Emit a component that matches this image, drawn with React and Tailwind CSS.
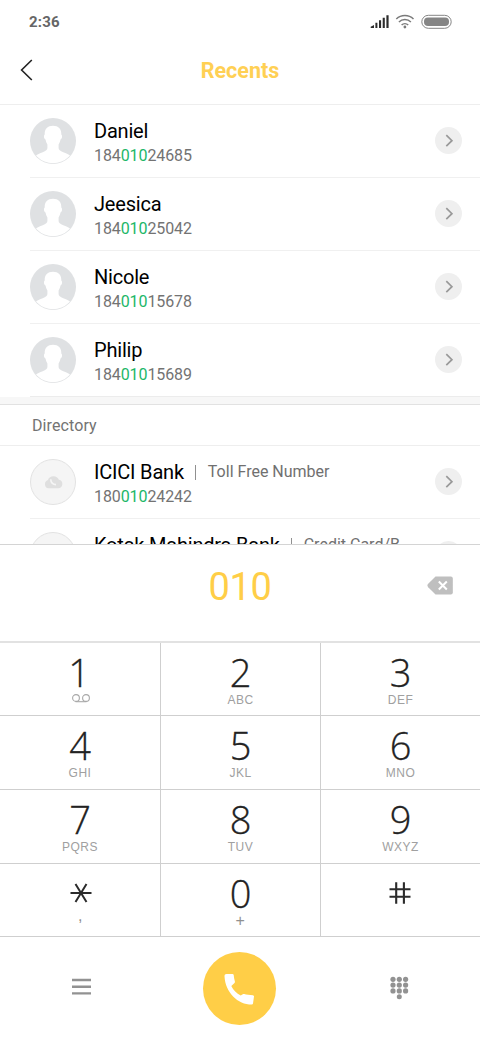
import { clsx } from "clsx";

const contacts = [
  { name: "Daniel", number: "18401024685" },
  { name: "Jeesica", number: "18401025042" },
  { name: "Nicole", number: "18401015678" },
  { name: "Philip", number: "18401015689" },
];

const directory = [
  { name: "ICICI Bank", number: "18001024242", label: "Toll Free Number" },
  { name: "Kotak Mahindra Bank", label: "Credit Card/B" },
];

const keys = [
  { digit: "1", icon: true },
  { digit: "2", letters: "ABC" },
  { digit: "3", letters: "DEF" },
  { digit: "4", letters: "GHI" },
  { digit: "5", letters: "JKL" },
  { digit: "6", letters: "MNO" },
  { digit: "7", letters: "PQRS" },
  { digit: "8", letters: "TUV" },
  { digit: "9", letters: "WXYZ" },
  { digit: "*", letters: "," },
  { digit: "0", letters: "+" },
  { digit: "#" },
];

const query = "010";

const PersonAvatar = () => (
  <svg className="w-[46px] h-[46px] shrink-0" viewBox="0 0 46 46">
    <defs>
      <clipPath id="avatar">
        <circle cx="23" cy="23" r="22.3" />
      </clipPath>
    </defs>
    <circle cx="23" cy="23" r="23" fill="#dfe1e3" />
    <path
      clipPath="url(#avatar)"
      fill="#fff"
      d="M23 7.800c-5.500 0-8.500 3.200-8.300 8.700-1.200.8-1 4 .8 5.100.4 2 1 3.600 1.900 4.800v3.600c0 2-1.500 2.900-4.700 4.200C9 35.700 6 37 3 39v10h40V39c-3-2-6-3.300-9.700-4.800-3.200-1.300-4.700-2.200-4.700-4.200v-3.600c.9-1.200 1.500-2.800 1.900-4.800 1.800-1.100 2-4.300.8-5.100C31.500 11 28.500 7.800 23 7.800z"
    />
  </svg>
);

const CloudAvatar = () => (
  <svg className="w-[46px] h-[46px] shrink-0" viewBox="0 0 46 46">
    <circle cx="23" cy="23" r="22.500" fill="#f5f5f5" stroke="#e2e2e2" />
    <path
      fill="#dfdfdf"
      d="M18.500 29.300a4.300 4.300 0 0 1-.6-8.300 6 6 0 0 1 11-.2 4.300 4.300 0 0 1-.6 8.500z"
    />
    <path
      d="M20.700 20.300c.2 3.300 2.200 5.200 5.300 5.300"
      fill="none"
      stroke="#f5f5f5"
      strokeWidth="1.700"
    />
  </svg>
);

const ChevronButton = ({ name }) => (
  <button
    className="w-[27px] h-[27px] mb-px shrink-0 rounded-full bg-[#efefef] flex items-center justify-center"
    aria-label={`Details for ${name}`}
  >
    <svg className="w-[27px] h-[27px]" viewBox="0 0 27 27" fill="none" stroke="#999" strokeWidth="1.700">
      <path d="M11.300 8.200l5.600 5.500-5.600 5.500" />
    </svg>
  </button>
);

const MatchedNumber = ({ number = "" }) => {
  const at = number.indexOf(query);
  return (
    <div className="h-5 pt-px text-[16px] leading-5 tracking-[-0.1px] text-[#737373]">
      {at >= 0 && (
        <>
          {number.slice(0, at)}
          <span className="text-[#1db768]">{query}</span>
          {number.slice(at + query.length)}
        </>
      )}
    </div>
  );
};

const ContactRow = ({ contact, avatar, last }) => (
  <div
    className={clsx(
      "ml-[30px] pr-[18px] h-[73px] shrink-0 flex items-center border-b",
      last ? "border-[#ececec]" : "border-[#f0f0f0]"
    )}
  >
    {avatar}
    <div className="ml-[18px] flex-1">
      <div className="flex items-center h-7 text-[20px] tracking-[-0.2px] text-black whitespace-nowrap">
        {contact.name}
        {contact.label && (
          <>
            <span className="w-px h-[15px] bg-[#909090] ml-[11px] mr-3" />
            <span className="text-[16px] tracking-normal text-[#707070]">{contact.label}</span>
          </>
        )}
      </div>
      <MatchedNumber number={contact.number} />
    </div>
    <ChevronButton name={contact.name} />
  </div>
);

const StatusBar = () => (
  <div className="h-[44px] shrink-0 flex items-center justify-between pl-[29px] pr-[28px]">
    <span className="text-[15px] font-bold tracking-[0.2px] text-[#666]">2:36</span>
    <svg className="w-[82px] h-4" viewBox="0 0 82 16" fill="none">
      <path
        fill="#2c2c2c"
        d="M.7 14v-1.300L4 11v3zM5.400 14V8.800h2V14zM9 14V6.300h2.100V14zM12.700 14V3.700h2.100V14zM16.400 14V1.300h2.200V14z"
      />
      <g stroke="#7a7a7a" strokeWidth="1.500">
        <path d="M26.300 5a12.500 12.500 0 0 1 17.200 0" />
        <path d="M28.900 8a8.600 8.600 0 0 1 12 0" />
        <path d="M31.600 11a4.700 4.700 0 0 1 6.600 0" />
      </g>
      <circle cx="34.900" cy="13" r="1.400" fill="#7a7a7a" />
      <rect x="51.800" y="1.300" width="29.400" height="13" rx="6.500" stroke="#858585" />
      <rect x="54" y="3.500" width="25" height="8.600" rx="4" fill="#858585" />
    </svg>
  </div>
);

const Key = ({ item, index }) => (
  <button
    className={clsx(
      "flex flex-col items-center border-b border-[#cfcfcf] pt-[9px]",
      index % 3 !== 2 && "border-r"
    )}
  >
    <span
      className={clsx(
        "h-10 flex items-center justify-center font-['Open_Sans',sans-serif] font-light text-[38px] leading-10 text-[#222] [-webkit-text-stroke:0.3px_#222]",
        item.digit === "1" && "pr-[2px]"
      )}
    >
      {item.digit === "*" ? (
        <svg className="w-6 h-6 ml-px" viewBox="0 0 24 24" fill="none" stroke="#2b2b2b" strokeWidth="2">
          <path d="M1.500 12h21M6.500 3l11 18M17.500 3l-11 18" />
        </svg>
      ) : item.digit === "#" ? (
        <svg className="w-6 h-6 mr-[2px]" viewBox="0 0 24 24" fill="none" stroke="#2b2b2b" strokeWidth="2.100">
          <path d="M1.500 8.300h21M1.500 15.800h21M8.200 1.300v21.400M15.900 1.300v21.400" />
        </svg>
      ) : (
        item.digit
      )}
    </span>
    <span
      className={clsx(
        "h-4 flex items-center font-['Liberation_Sans',sans-serif] leading-4 tracking-[0.5px]",
        item.letters === "+" || item.letters === "," ? "text-[16px] text-[#909090]" : "text-[12px] text-[#a0a0a0]"
      )}
    >
      {item.icon ? (
        <svg className="w-[18px] h-[9px] mb-[3px] ml-px" viewBox="0 0 18 9" fill="none" stroke="#a8a8a8" strokeWidth="1.100">
          <circle cx="4" cy="4" r="3.400" />
          <circle cx="14" cy="4" r="3.400" />
          <path d="M3.500 7.700h11" />
        </svg>
      ) : item.letters === "," ? (
        <span className="pb-[11px] pl-px">{item.letters}</span>
      ) : (
        item.letters
      )}
    </span>
  </button>
);

const Dialer = () => (
  <div className="shrink-0 bg-white border-t border-[#d4d4d4]">
    <div className="h-[98px] border-b-2 border-[#e2e2e2] grid grid-cols-[1fr_auto_1fr] items-start">
      <span />
      <span className="mt-[21px] text-[38px] leading-[42px] tracking-[-0.4px] text-[#ffce47]">{query}</span>
      <button className="mt-[31px] mr-[27px] justify-self-end" aria-label="Delete digit">
        <svg className="w-[26px] h-[19px]" viewBox="0 0 26 19">
          <path
            fill="#bfbfbf"
            d="M8.500.5h15.300a2 2 0 0 1 2 2v14a2 2 0 0 1-2 2H8.500L1.200 11.200q-1.600-1.700 0-3.400z"
          />
          <path d="M11.800 5.500l8 8M19.800 5.500l-8 8" stroke="#fff" strokeWidth="2" />
        </svg>
      </button>
    </div>
    <div className="grid grid-cols-[161px_160px_159px] grid-rows-[73px_74px_74px_73px]">
      {keys.map((item, index) => (
        <Key key={item.digit} item={item} index={index} />
      ))}
    </div>
    <div className="h-[103px] grid grid-cols-[162px_155px_163px] justify-items-center pt-[15px]">
      <button className="mt-[25px] h-[20px]" aria-label="Menu">
        <svg className="w-[19px] h-[20px]" viewBox="0 0 19 20" stroke="#929292" strokeWidth="2.400">
          <path d="M0 3h19M0 9.700h19M0 16.400h19" />
        </svg>
      </button>
      <button
        className="w-[73px] h-[73px] rounded-full bg-[#ffce47] flex items-center justify-center"
        aria-label="Call"
      >
        <svg className="w-[31px] h-[32px]" viewBox="0 0 31 32" fill="#fff">
          <path d="M2.500 1h6c.7 0 1.100.4 1.200 1 .2 2.300.6 4.300 1.200 6.400.2.6 0 1.100-.4 1.500L7.300 13c2 4.100 5.300 7.500 9.400 9.600l2.100-1.300c.4-.4 1-.5 1.500-.3 2 .6 5.300 1 8.600 1.300.7.100 1.100.6 1.100 1.200L29 30.500c-.1.700-.5 1.100-1.200 1.100C13.700 31.500 1.300 19.500.5 3.200.5 1.900 1.200 1 2.500 1z" />
        </svg>
      </button>
      <button className="mt-[24px] ml-px h-[24px]" aria-label="Toggle keypad">
        <svg className="w-[19px] h-[24px]" viewBox="0 0 19 24" fill="#929292">
          {[3.3, 9.1, 14.9].map((cy) =>
            [3, 9.3, 15.6].map((cx) => <circle key={`${cx}-${cy}`} cx={cx} cy={cy} r="2.600" />)
          )}
          <circle cx="9.300" cy="20.700" r="2.500" />
        </svg>
      </button>
    </div>
  </div>
);

export default function App() {
  return (
    <div className="w-[480px] h-[1040px] flex flex-col overflow-hidden bg-white font-[Roboto,sans-serif]">
      <StatusBar />
      <header className="h-[61px] shrink-0 border-b border-[#eeeeee] grid grid-cols-[1fr_auto_1fr] pt-[11px] items-start">
        <button className="ml-5 mt-[4px] justify-self-start" aria-label="Back">
          <svg className="w-[13px] h-[22px]" viewBox="0 0 13 22" fill="none" stroke="#222" strokeWidth="1.600">
            <path d="M11.800 1L1.600 11l10.200 10" />
          </svg>
        </button>
        <h1 className="mt-px text-[21.5px] leading-[30px] font-bold text-[#ffd054]">Recents</h1>
      </header>
      <div className="flex-1 min-h-0 overflow-hidden flex flex-col">
        {contacts.map((contact, i) => (
          <ContactRow
            key={contact.number}
            contact={contact}
            avatar={<PersonAvatar />}
            last={i === contacts.length - 1}
          />
        ))}
        <div className="h-2 shrink-0 bg-[#f7f7f7] border-b border-[#e2e2e2]" />
        <h2 className="h-[41px] shrink-0 pl-8 pt-[2px] flex items-center border-b border-[#eeeeee] text-[16px] tracking-[0.1px] text-[#737373]">
          Directory
        </h2>
        {directory.map((contact) => (
          <ContactRow key={contact.name} contact={contact} avatar={<CloudAvatar />} />
        ))}
      </div>
      <Dialer />
    </div>
  );
}
